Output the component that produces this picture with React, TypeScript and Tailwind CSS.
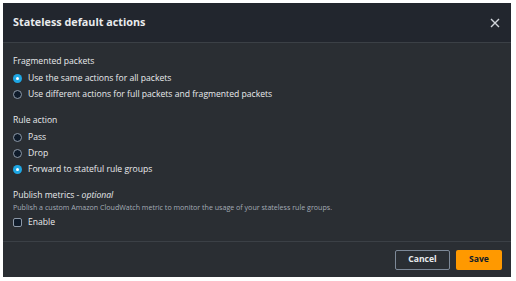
import React, { useState } from 'react';

const Radio: React.FC<{ checked: boolean; label: string; onClick: () => void }> = ({ checked, label, onClick }) => (
  <button onClick={onClick} className="flex items-center gap-[6px] h-[16px] text-left">
    {checked ? (
      <span className="w-[9px] h-[9px] rounded-full bg-[#1ea7e4] flex items-center justify-center">
        <span className="w-[3px] h-[3px] rounded-full bg-white" />
      </span>
    ) : (
      <span className="w-[9px] h-[9px] rounded-full border border-[#8d99a8] bg-[#0f1b2a]" />
    )}
    <span className="text-[8.6px] text-[#e9ebed]">{label}</span>
  </button>
);

export default function App() {
  const [fragments, setFragments] = useState('same');
  const [action, setAction] = useState('forward');
  const [enabled, setEnabled] = useState(false);

  return (
    <div className="w-[516px] h-[281px] bg-white p-[3px] pr-[5px] pb-[4px]" style={{ fontFamily: '"Open Sans", sans-serif' }}>
      <div className="h-full flex flex-col bg-[#2a2e33]">
        <div className="h-[40px] bg-[#22262e] border-b border-[#3b4046] flex items-center justify-between pl-[10px] pr-[11px]">
          <h1 className="text-[10.8px] font-bold text-[#e9ebed]">Stateless default actions</h1>
          <button className="text-[#d1d5db]">
            <svg width="10" height="10" viewBox="0 0 10 10" fill="none" stroke="currentColor" strokeWidth="1.4">
              <path d="M1 1l8 8M9 1l-8 8" />
            </svg>
          </button>
        </div>

        <div className="flex-1 px-[10px] pt-[11px] border-b border-[#3b4046]">
          <div className="text-[8.6px] leading-[14px] text-[#e9ebed] mb-[2px]">Fragmented packets</div>
          <div className="flex flex-col">
            <Radio checked={fragments === 'same'} label="Use the same actions for all packets" onClick={() => setFragments('same')} />
            <Radio checked={fragments === 'diff'} label="Use different actions for full packets and fragmented packets" onClick={() => setFragments('diff')} />
          </div>

          <div className="text-[8.6px] leading-[14px] text-[#e9ebed] mt-[11px] mb-[2px]">Rule action</div>
          <div className="flex flex-col">
            <Radio checked={action === 'pass'} label="Pass" onClick={() => setAction('pass')} />
            <Radio checked={action === 'drop'} label="Drop" onClick={() => setAction('drop')} />
            <Radio checked={action === 'forward'} label="Forward to stateful rule groups" onClick={() => setAction('forward')} />
          </div>

          <div className="text-[8.6px] leading-[14px] text-[#e9ebed] mt-[11px]">
            Publish metrics - <i>optional</i>
          </div>
          <div className="text-[7.1px] leading-[11px] text-[#a4acb6]">
            Publish a custom Amazon CloudWatch metric to monitor the usage of your stateless rule groups.
          </div>
          <button onClick={() => setEnabled(!enabled)} className="flex items-center gap-[6px] h-[16px] mt-[1px]">
            <span className="w-[9px] h-[9px] rounded-[2px] border border-[#8d99a8] bg-[#0f1b2a]" />
            <span className="text-[8.6px] text-[#e9ebed]">Enable</span>
          </button>
        </div>

        <div className="h-[35px] flex items-center justify-end gap-[6px] pr-[9px]">
          <button className="h-[20px] w-[55px] rounded-[2px] border border-[#7d8998] text-[8.6px] font-bold text-[#e9ebed]">Cancel</button>
          <button className="h-[20px] w-[46px] rounded-[2px] bg-[#ff9900] text-[8.6px] font-bold text-[#0f1b2a]">Save</button>
        </div>
      </div>
    </div>
  );
}
